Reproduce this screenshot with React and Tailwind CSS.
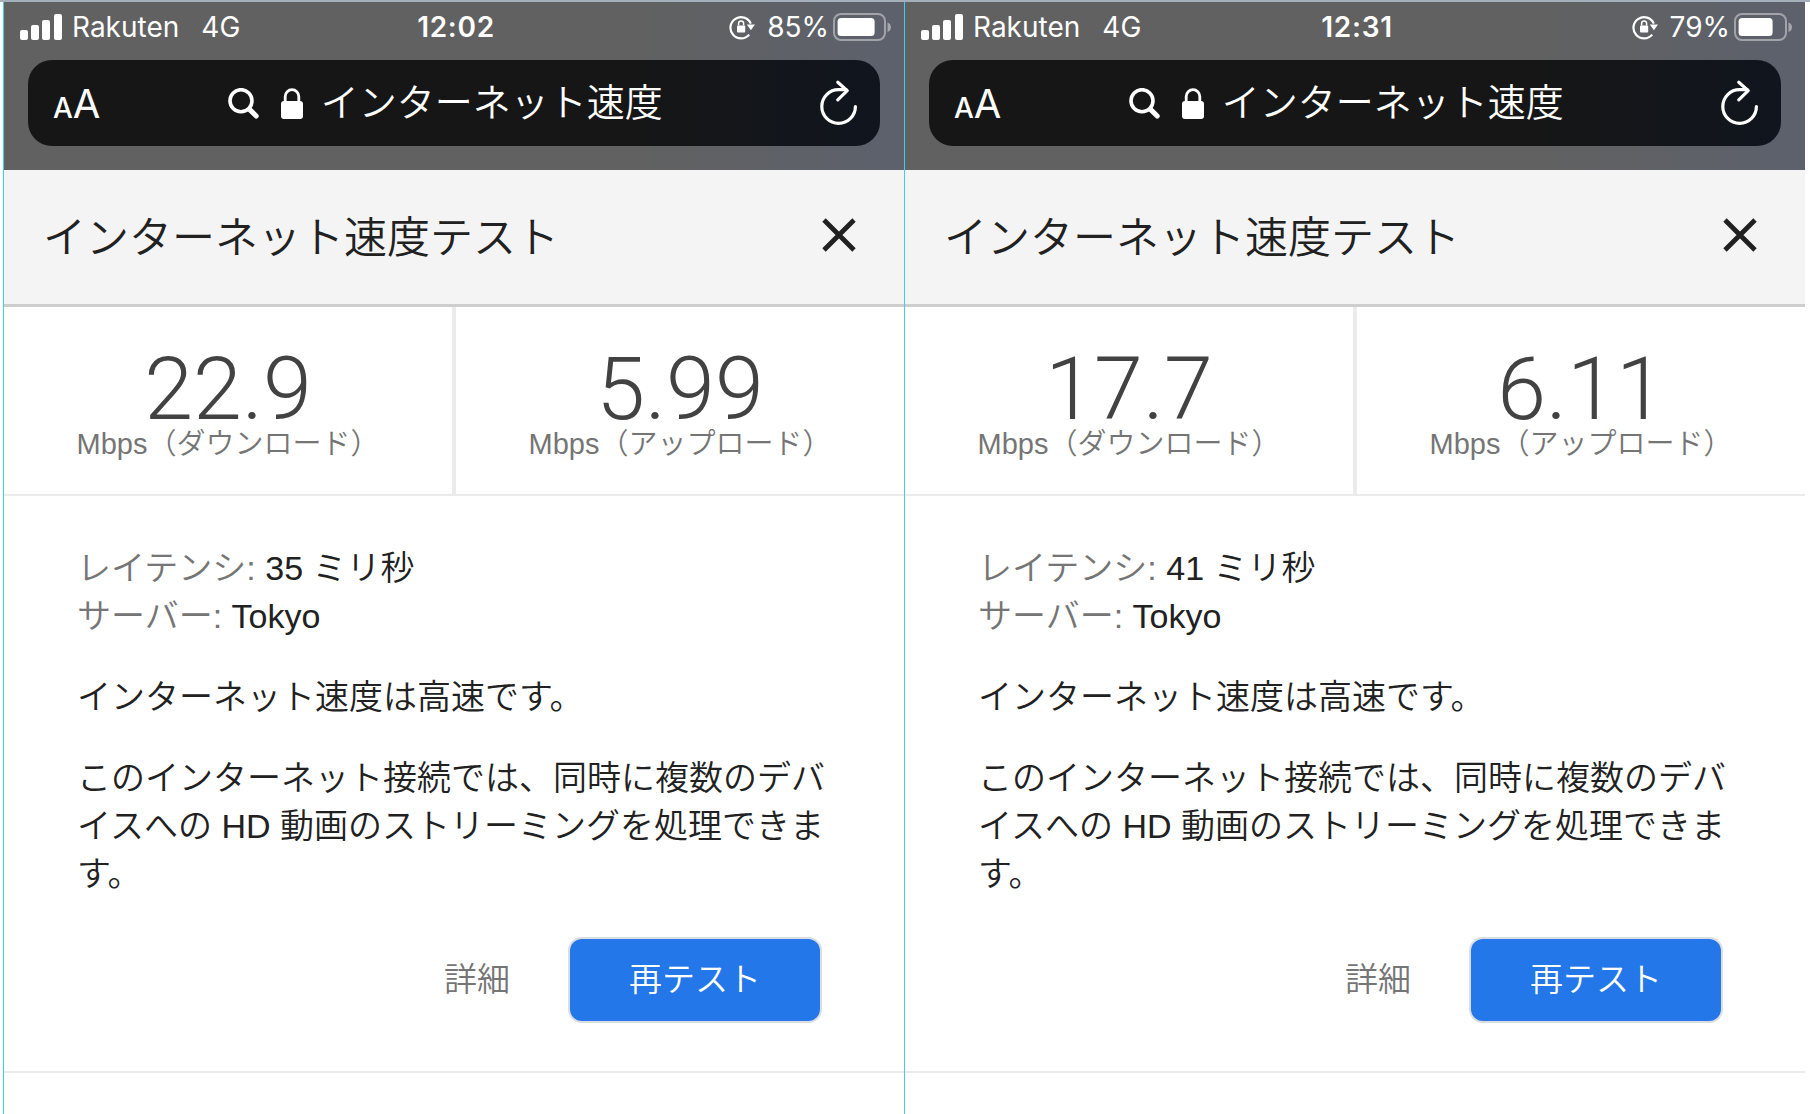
import { useState } from 'react'

const results = [
  { time: '12:02', battery: 85, fill: 37, down: '22.9', up: '5.99', latency: 35 },
  { time: '12:31', battery: 79, fill: 34, down: '17.7', up: '6.11', latency: 41 },
]

function SignalIcon() {
  return (
    <svg width="42" height="27" viewBox="0 0 42 27" fill="currentColor" aria-hidden="true">
      <rect x="0" y="16" width="8" height="10" rx="2" />
      <rect x="11" y="11" width="8" height="15" rx="2" />
      <rect x="22" y="6" width="8" height="20" rx="2" />
      <rect x="34" y="0" width="8" height="26" rx="2" />
    </svg>
  )
}

function RotationLockIcon() {
  return (
    <svg width="26" height="26" viewBox="0 0 26 26" fill="none" aria-hidden="true">
      <path d="M20.2 20.6A10.6 10.6 0 1 1 21.8 9.6" stroke="currentColor" strokeWidth="2.2" />
      <path d="M17.8 10.4h8.2l-4.1 5.8z" fill="currentColor" />
      <rect x="8" y="11.4" width="8.2" height="7" rx="1" fill="currentColor" />
      <path d="M9.6 11.6V9.4a2.5 2.5 0 0 1 5 0v2.2" stroke="currentColor" strokeWidth="1.5" />
    </svg>
  )
}

function BatteryIcon({ fill }) {
  return (
    <svg width="59" height="28" viewBox="0 0 59 28" aria-hidden="true">
      <rect x="1" y="1" width="51" height="26" rx="7" fill="none" stroke="#fff" strokeOpacity="0.42" strokeWidth="2" />
      <rect x="4.6" y="5" width={fill} height="18" rx="3.5" fill="#fff" />
      <path d="M54.5 9.5c4.6 1.2 4.6 8.2 0 9.4z" fill="#fff" fillOpacity="0.45" />
    </svg>
  )
}

function SearchIcon() {
  return (
    <svg width="31" height="31" viewBox="0 0 31 31" fill="none" stroke="currentColor" strokeLinecap="round" aria-hidden="true">
      <circle cx="13" cy="12.7" r="11" strokeWidth="3.6" />
      <path d="M21.5 21.4L28.2 28" strokeWidth="5" />
    </svg>
  )
}

function LockIcon() {
  return (
    <svg width="22" height="31" viewBox="0 0 22 31" aria-hidden="true">
      <rect x="0" y="13" width="22" height="18" rx="3" fill="currentColor" />
      <path d="M4.2 14V8.5a6.8 6.8 0 0 1 13.6 0V14" fill="none" stroke="currentColor" strokeWidth="2.8" />
    </svg>
  )
}

function ReloadIcon() {
  return (
    <svg width="38" height="46" viewBox="0 0 38 46" fill="none" stroke="currentColor" strokeWidth="3.2" strokeLinecap="round" strokeLinejoin="round" aria-hidden="true">
      <path d="M35.4 26.5a16.8 16.8 0 1 1-16.8-16.8h7.6" />
      <path d="M17.8 2.2L27.2 10.6 17.8 19.8" />
    </svg>
  )
}

function CloseIcon() {
  return (
    <svg width="34" height="34" viewBox="0 0 34 34" stroke="currentColor" strokeWidth="4.8" aria-hidden="true">
      <path d="M2 2l30 30M32 2L2 32" />
    </svg>
  )
}

function StatusBar({ time, battery, fill }) {
  return (
    <div className="grid h-[50px] grid-cols-[1fr_auto_1fr] items-center pr-3 pl-4 font-[Inter,sans-serif] text-[28px] leading-8 text-white">
      <div className="flex items-center gap-2.5">
        <SignalIcon />
        <span>Rakuten</span>
        <span className="ml-3">4G</span>
      </div>
      <span className="font-semibold tracking-wide">{time}</span>
      <div className="flex items-center justify-end gap-1">
        <RotationLockIcon />
        <span className="ml-2">{battery}%</span>
        <BatteryIcon fill={fill} />
      </div>
    </div>
  )
}

function AddressBar() {
  return (
    <div className="mx-6 mt-2 flex h-[86px] items-center justify-between rounded-3xl bg-linear-to-r from-[#161616] from-70% to-[#10151e] pr-[22px] pl-[25px] text-white">
      <button type="button" aria-label="表示設定" className="flex items-baseline pt-1.5 font-[Inter,sans-serif]">
        <span className="text-[28px] leading-10 font-medium">A</span>
        <span className="text-[40px] leading-10">A</span>
      </button>
      <button type="button" className="mr-[30px] flex items-center">
        <SearchIcon />
        <span className="ml-[22px]"><LockIcon /></span>
        <span className="ml-[18px] text-[38px] leading-[48px] font-[350]">インターネット速度</span>
      </button>
      <button type="button" aria-label="再読み込み">
        <ReloadIcon />
      </button>
    </div>
  )
}

function Speed({ value, label }) {
  return (
    <div className="flex flex-col items-center bg-white pt-[42px] pb-[34px]">
      <span className="font-[Roboto,sans-serif] text-[88px] leading-[79px] font-light text-[#424242]">{value}</span>
      <span className="text-[29px] leading-8 font-[350] text-[#757575]">Mbps（{label}）</span>
    </div>
  )
}

function Phone({ result }) {
  const [open, setOpen] = useState(true)

  return (
    <section className="min-w-0 flex-1 border-[#3fcdf8] font-['Liberation_Sans','Noto_Sans_CJK_JP',sans-serif] first:border-x">
      <div className="h-[168px] bg-linear-to-r from-[#616161] from-70% to-[#5c616c]">
        <StatusBar time={result.time} battery={result.battery} fill={result.fill} />
        <AddressBar />
      </div>

      <header className="flex h-[137px] items-center justify-between border-b-3 border-[#cecece] bg-[#f4f4f4] pr-12 pb-1 pl-[39px] text-[#212121]">
        <h1 className="pt-1.5 text-[43px] leading-[60px] font-[350]">インターネット速度テスト</h1>
        <button type="button" aria-label="閉じる" onClick={() => setOpen(false)}>
          <CloseIcon />
        </button>
      </header>

      {open && (
        <>
          <div className="grid grid-cols-2 gap-x-[4px] border-b-2 border-[#ebebeb] bg-[#ebebeb]">
            <Speed value={result.down} label="ダウンロード" />
            <Speed value={result.up} label="アップロード" />
          </div>

          <div className="flex flex-col gap-[33px] border-b-2 border-[#ebebeb] pt-12 pr-16 pb-[50px] pl-[73px] text-[34px] leading-[48px] font-[350] text-[#212121]">
            <div>
              <p><span className="text-[#757575]">レイテンシ:</span> {result.latency} ミリ秒</p>
              <p><span className="text-[#757575]">サーバー:</span> Tokyo</p>
            </div>
            <p>インターネット速度は高速です。</p>
            <p>このインターネット接続では、同時に複数のデバイスへの HD 動画のストリーミングを処理できます。</p>
            <div className="flex items-center justify-end gap-[60px] pt-2 pr-5">
              <button type="button" className="text-[33px] text-[#757575]">詳細</button>
              <button type="button" className="h-[82px] w-[250px] rounded-xl bg-[#2377e8] text-[33px] text-white ring-2 ring-[#dadde1]">
                再テスト
              </button>
            </div>
          </div>
        </>
      )}
    </section>
  )
}

export default function App() {
  return (
    <main className="flex min-h-screen border-t-2 border-[#a3b0bc] bg-white pr-[5px] pl-[3px]">
      {results.map((result) => (
        <Phone key={result.time} result={result} />
      ))}
    </main>
  )
}
